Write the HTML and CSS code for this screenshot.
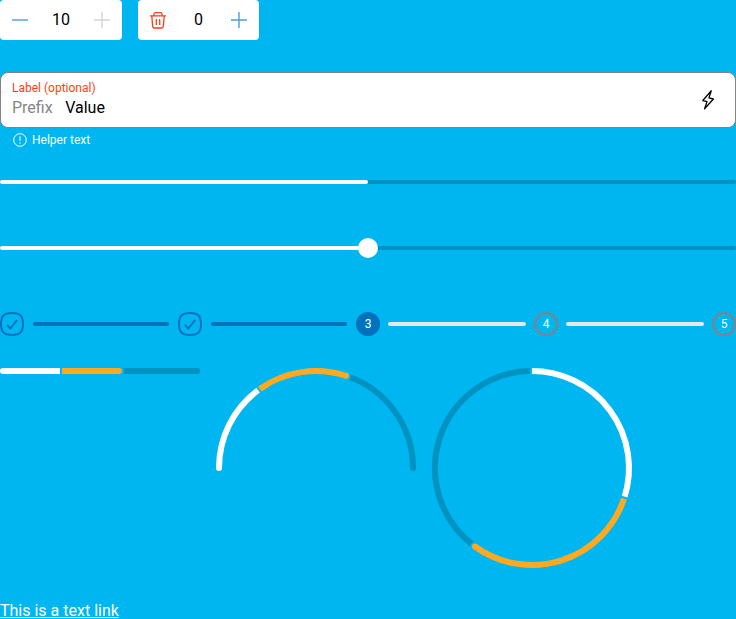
FILE: index.html
```html
<!DOCTYPE html>
<html lang="en">
<head>
<meta charset="utf-8">
<title>Components</title>
<link rel="stylesheet" href="styles.css">
</head>
<body>
<div class="counters">
  <div class="counter">
    <svg class="icon" viewBox="0 0 20 20"><path d="M2 10h16"/></svg>
    <span class="count">10</span>
    <svg class="icon disabled" viewBox="0 0 20 20"><path d="M2 10h16M10 2v16"/></svg>
  </div>
  <div class="counter narrow">
    <svg class="icon danger" viewBox="0 0 20 20"><path d="M2 5.800h16M6 5.800V4.200c0-.9.6-1.500 1.500-1.500h5c.9 0 1.500.6 1.500 1.500v1.600M3.800 5.800l.8 10.300c.1 1.200.8 1.900 1.900 1.900h7c1.100 0 1.800-.7 1.900-1.900l.8-10.300M8.300 9v6M11.700 9v6"/></svg>
    <span class="count">0</span>
    <svg class="icon" viewBox="0 0 20 20"><path d="M2 10h16M10 2v16"/></svg>
  </div>
</div>
<div class="field">
  <div class="field-text">
    <div class="label">Label (optional)</div>
    <div class="value-row"><span class="prefix">Prefix</span><span>Value</span></div>
  </div>
  <svg class="bolt" viewBox="0 0 24 24"><path d="M15.300 2.800L6.800 12.500l4.200 1.100-2.400 7.200 8.800-9.800-4.500-1.100z"/></svg>
</div>
<div class="helper">
  <svg class="alert" viewBox="0 0 14 14"><circle cx="7" cy="7" r="6.300"/><path d="M7 3.300v4.700M7 9.400v1.300"/></svg>
  <span>Helper text</span>
</div>
<div class="track progress"><div class="fill"></div></div>
<div class="slider"><div class="track"><div class="fill"></div></div><div class="thumb"></div></div>
<div class="steps">
  <svg class="done" viewBox="0 0 24 24"><path d="M12 1C4 1 1 4 1 12s3 11 11 11 11-3 11-11S20 1 12 1z"/><path d="M7 12.800l3.300 3.700L17.200 7.800"/></svg>
  <i class="line past"></i>
  <svg class="done" viewBox="0 0 24 24"><path d="M12 1C4 1 1 4 1 12s3 11 11 11 11-3 11-11S20 1 12 1z"/><path d="M7 12.800l3.300 3.700L17.200 7.800"/></svg>
  <i class="line past"></i>
  <span class="step current">3</span>
  <i class="line"></i>
  <span class="step">4</span>
  <i class="line"></i>
  <span class="step">5</span>
</div>
<div class="charts">
  <svg class="bar" viewBox="0 0 200 6">
    <path class="rest-fill" d="M120 0h77a3 3 0 0 1 0 6h-77z"/>
    <path class="gap-fill" d="M60 0h63c1.600 1.500 1.600 4.500 0 6H60z"/>
    <path class="white-fill" d="M3 0h57v6H3a3 3 0 0 1 0-6z"/>
    <path class="orange-fill" d="M62 0h57a3 3 0 0 1 0 6H62z"/>
  </svg>
  <svg class="arc" viewBox="0 0 200 200">
    <path class="rest" d="M130 7.750A97 97 0 0 1 197 100"/>
    <circle class="rest-fill" cx="197" cy="100" r="3"/>
    <circle class="gap-fill" cx="130" cy="7.750" r="4.800"/>
    <path class="white" d="M3 100A97 97 0 0 1 42.170 22.130"/>
    <circle class="white-fill" cx="3" cy="100" r="3"/>
    <path class="orange" d="M43.810 20.930A97 97 0 0 1 130 7.750"/>
    <circle class="orange-fill" cx="130" cy="7.750" r="3"/>
  </svg>
  <svg class="arc" viewBox="0 0 200 200">
    <path class="rest" d="M42.980 178.470A97 97 0 0 1 97.970 3.020"/>
    <circle class="gap-fill" cx="42.980" cy="178.470" r="4.800"/>
    <path class="white" d="M100 3A97 97 0 0 1 192.660 128.680"/>
    <path class="orange" d="M192.040 130.620A97 97 0 0 1 42.980 178.470"/>
    <circle class="orange-fill" cx="42.980" cy="178.470" r="3"/>
  </svg>
</div>
<a class="link" href="#">This is a text link</a>
</body>
</html>
```
FILE: styles.css
```css
* { box-sizing: border-box; }
html { overflow: hidden; }
body {
  margin: 0;
  height: 619px;
  overflow: hidden;
  background: #00b6f1;
  color: #000;
  font: 16px/24px Roboto, sans-serif;
}
svg { display: block; flex: none; fill: none; overflow: visible; }
.counters { display: flex; gap: 16px; }
.counter {
  display: flex;
  align-items: center;
  justify-content: space-between;
  width: 122px;
  height: 40px;
  padding: 0 10px;
  background: #fff;
  border-radius: 4px;
}
.counter.narrow { width: 121px; }
.icon { width: 20px; height: 20px; stroke: #4f9fd5; stroke-width: 1.400; }
.icon.disabled { stroke: #d3d4d5; }
.icon.danger { stroke: #ff3e15; stroke-width: 1.300; }
.field {
  display: flex;
  align-items: center;
  justify-content: space-between;
  height: 56px;
  margin-top: 32px;
  padding: 0 15px 0 11px;
  background: #fff;
  border: 1px solid #808285;
  border-radius: 8px;
}
.label { color: #ff3e15; font-size: 12px; line-height: 16px; }
.value-row { display: flex; gap: 12.500px; }
.prefix { color: #868686; }
.bolt { width: 24px; height: 24px; stroke: #000; stroke-width: 1.300; stroke-linejoin: round; }
.helper {
  display: flex;
  align-items: center;
  gap: 5px;
  height: 16px;
  margin-top: 4px;
  padding-left: 13px;
  color: #fff;
  font-size: 12px;
}
.alert { width: 14px; height: 14px; stroke: #fff; stroke-width: 1; }
.track { height: 4px; background: #0092c1; border-radius: 2px; }
.progress { margin-top: 32px; }
.fill { width: 50%; height: 4px; background: #fff; border-radius: 2px; }
.slider { position: relative; margin-top: 62px; }
.thumb {
  position: absolute;
  top: -8px;
  left: calc(50% - 10px);
  width: 20px;
  height: 20px;
  background: #fff;
  border-radius: 50%;
}
.steps { display: flex; align-items: center; height: 24px; margin-top: 62px; }
.done { width: 24px; height: 24px; stroke: #0072bc; stroke-width: 2; }
.line { flex: 1 1 138px; height: 4px; margin: 0 8px; background: #e6e7e8; border-radius: 2px; }
.line.past { flex-basis: 136px; margin: 0 9px; background: #0072bc; }
.step {
  flex: none;
  width: 24px;
  height: 24px;
  border: 2px solid #808285;
  border-radius: 50%;
  color: #fff;
  font-size: 12px;
  line-height: 20px;
  text-align: center;
}
.step.current { background: #0072bc; border-color: #0072bc; }
.charts { display: flex; gap: 16px; margin-top: 32px; }
.bar { width: 200px; height: 6px; }
.arc { width: 200px; height: 200px; }
.white, .orange, .rest { stroke-width: 6; }
.white { stroke: #fff; }
.orange { stroke: #ffa822; }
.rest { stroke: #0092c1; }
.white-fill { fill: #fff; }
.orange-fill { fill: #ffa822; }
.rest-fill { fill: #0092c1; }
.gap-fill { fill: #00b6f1; }
.link { display: block; width: max-content; margin-top: 31px; color: #fff; }
```
